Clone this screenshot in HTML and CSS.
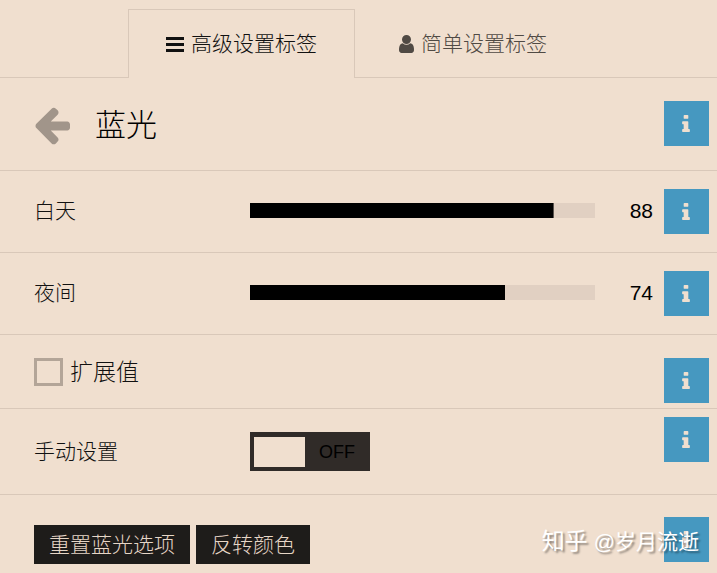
FILE: index.html
```
<!DOCTYPE html>
<html lang="zh-CN">
<head>
  <meta charset="utf-8">
  <title>蓝光</title>
  <link rel="stylesheet" href="styles.css">
</head>
<body>
  <!-- Icon shapes -->
  <svg class="sprite" aria-hidden="true">
    <symbol id="icon-info" viewBox="576 128 640 1408">
      <path d="M1216 1344v128q0 26-19 45t-45 19h-512q-26 0-45-19t-19-45v-128q0-26 19-45t45-19h64v-384h-64q-26 0-45-19t-19-45v-128q0-26 19-45t45-19h384q26 0 45 19t19 45v576h64q26 0 45 19t19 45zm-128-1152v192q0 26-19 45t-45 19h-256q-26 0-45-19t-19-45v-192q0-26 19-45t45-19h256q26 0 45 19t19 45z"/>
    </symbol>
  </svg>

  <!-- Tabs -->
  <nav class="tabs">
    <a href="#advanced" class="tab active">
      <svg class="icon-bars" viewBox="0 0 18 15"><path d="M0 0h18v3H0zM0 6h18v3H0zM0 12h18v3H0z"/></svg>
      高级设置标签
    </a>
    <a href="#simple" class="tab">
      <svg class="icon-user" viewBox="256 128 1280 1536"><path d="M1536 1399q0 109-62.5 187t-150.5 78h-854q-88 0-150.5-78t-62.5-187q0-85 8.5-160.5t31.5-152 58.5-131 94-89 134.5-34.5q131 128 313 128t313-128q76 0 134.5 34.5t94 89 58.5 131 31.5 152 8.5 160.5zm-256-887q0 159-112.5 271.5t-271.5 112.5-271.5-112.5-112.5-271.5 112.5-271.5 271.5-112.5 271.5 112.5 112.5 271.5z"/></svg>
      简单设置标签
    </a>
  </nav>

  <main id="advanced">
    <!-- Title -->
    <div class="row title-row">
      <div class="title">
        <a href="#back" class="back" aria-label="返回">
          <svg viewBox="128 160 1536 1600"><path d="M1664 896v128q0 53-32.5 90.5t-84.5 37.5h-704l293 294q38 36 38 90t-38 90l-75 76q-37 37-90 37-52 0-91-37l-651-652q-37-37-37-90 0-52 37-91l651-650q38-38 91-38 52 0 90 38l75 74q38 38 38 91t-38 91l-293 293h704q52 0 84.5 37.5t32.5 90.5z"/></svg>
        </a>
        <h1>蓝光</h1>
      </div>
      <button type="button" class="info" aria-label="说明"><svg><use href="#icon-info"/></svg></button>
    </div>

    <!-- Sliders -->
    <div class="row slider-row">
      <label class="name" for="day">白天</label>
      <input type="range" id="day" class="slider" min="0" max="100" value="88" style="--value: 88%">
      <output class="value" for="day">88</output>
      <button type="button" class="info" aria-label="说明"><svg><use href="#icon-info"/></svg></button>
    </div>
    <div class="row slider-row">
      <label class="name" for="night">夜间</label>
      <input type="range" id="night" class="slider" min="0" max="100" value="74" style="--value: 74%">
      <output class="value" for="night">74</output>
      <button type="button" class="info" aria-label="说明"><svg><use href="#icon-info"/></svg></button>
    </div>

    <!-- Extended values -->
    <div class="row check-row">
      <label class="check">
        <input type="checkbox" id="extend">
        扩展值
      </label>
      <button type="button" class="info" aria-label="说明"><svg><use href="#icon-info"/></svg></button>
    </div>

    <!-- Manual switch -->
    <div class="row switch-row">
      <label class="name" for="manual">手动设置</label>
      <label class="switch">
        <input type="checkbox" id="manual" role="switch">
        <span>OFF</span>
      </label>
      <button type="button" class="info" aria-label="说明"><svg><use href="#icon-info"/></svg></button>
    </div>

    <!-- Actions -->
    <div class="row action-row">
      <div class="actions">
        <button type="button" class="btn">重置蓝光选项</button>
        <button type="button" class="btn">反转颜色</button>
      </div>
      <button type="button" class="info" aria-label="说明"><svg><use href="#icon-info"/></svg></button>
    </div>
  </main>

  <div class="watermark"><b>知乎</b> @岁月流逝</div>
</body>
</html>
```
FILE: styles.css
```
* {
  box-sizing: border-box;
}
body {
  position: relative;
  margin: 0;
  background-color: #f0dfcf;
  color: #111;
  font-family: "Liberation Sans", "Noto Sans CJK SC", sans-serif;
  font-size: 21px;
  font-weight: 300;
  line-height: 30px;
}
.sprite {
  position: absolute;
  width: 0;
  height: 0;
}
svg {
  fill: currentColor;
}
button {
  font: inherit;
  border: none;
  cursor: pointer;
}

/* Tabs */
.tabs {
  display: flex;
  justify-content: center;
  gap: 6px;
  padding: 9px 4px 0 0;
  border-bottom: 1px solid #d9c8b9;
}
.tab {
  display: flex;
  align-items: center;
  gap: 7px;
  height: 69px;
  margin-bottom: -1px;
  padding: 0 37px;
  border: 1px solid transparent;
  border-bottom: none;
  color: #504a44;
  text-decoration: none;
}
.tab.active {
  border-color: #d9c8b9;
  background-color: #f0dfcf;
  color: #111;
}
.icon-bars {
  width: 18px;
  height: 15px;
}
.icon-user {
  width: 15px;
  height: 18px;
}

/* Setting rows */
.row {
  display: grid;
  grid-template-columns: 216px 1fr 69px 45px;
  align-items: center;
  min-height: 82px;
  padding: 0 8px 0 34px;
  border-bottom: 1px solid #d9c8b9;
}
.info {
  display: flex;
  align-items: center;
  justify-content: center;
  grid-column: 4;
  width: 45px;
  height: 45px;
  padding: 0 2px 0 0;
  background-color: #4698c0;
  color: #f0dfcf;
}
.info svg {
  width: 8px;
  height: 17px;
}

/* Title */
.title-row {
  min-height: 93px;
}
.title-row .info {
  align-self: start;
  margin-top: 23px;
}
.title {
  display: flex;
  align-items: center;
  gap: 25px;
  grid-column: 1 / 4;
  padding-top: 4px;
}
.back {
  color: #a1958a;
}
.back svg {
  display: block;
  width: 36px;
  height: 38px;
}
h1 {
  margin: 0;
  color: #000;
  font-size: 31px;
  font-weight: 300;
}

/* Slider */
.slider {
  appearance: none;
  width: 100%;
  height: 15px;
  margin: 0;
  background: linear-gradient(#000, #000) 0 0 / var(--value) 100% no-repeat #e1d0c2;
}
.slider::-webkit-slider-thumb {
  appearance: none;
  width: 1px;
  height: 15px;
  opacity: 0;
}
.slider-row {
  padding-bottom: 2px;
}
.slider-row .info {
  align-self: start;
  margin-top: 18px;
}
.value {
  padding-right: 11px;
  color: #000;
  text-align: right;
}

/* Checkbox */
.check-row {
  min-height: 74px;
}
.check-row .info {
  align-self: end;
  margin-bottom: 5px;
}
.check {
  display: flex;
  align-items: center;
  gap: 7px;
  grid-column: 1 / 4;
  font-size: 23px;
}
.check input {
  appearance: none;
  width: 29px;
  height: 28px;
  margin: 0;
  border: 3px solid #b3a598;
}

/* Switch */
.switch-row {
  min-height: 86px;
}
.switch-row .info {
  align-self: start;
  margin-top: 8px;
}
.switch {
  display: flex;
  align-items: center;
  gap: 14px;
  width: 120px;
  height: 39px;
  padding: 4px;
  background-color: #302b28;
  color: #000;
  font-size: 18px;
}
.switch input {
  appearance: none;
  width: 51px;
  height: 30px;
  margin: 0;
  background-color: #f0dfcf;
}

/* Actions */
.action-row {
  align-items: start;
  min-height: 78px;
  border-bottom: none;
}
.actions {
  display: flex;
  flex-wrap: wrap;
  gap: 6px;
  grid-column: 1 / 4;
  padding-top: 30px;
}
.btn {
  height: 39px;
  padding: 0 15px;
  background-color: #1e1c1a;
  color: #e6d6c7;
}
.action-row .info {
  margin-top: 22px;
}

/* Watermark over the bottom corner */
.watermark {
  position: absolute;
  right: 18px;
  bottom: 16px;
  color: #fff;
  font-weight: 400;
  text-shadow: 2px 2px 2px rgba(0, 0, 0, 0.4);
}
.watermark b {
  font-size: 23px;
  font-weight: 400;
}
```
